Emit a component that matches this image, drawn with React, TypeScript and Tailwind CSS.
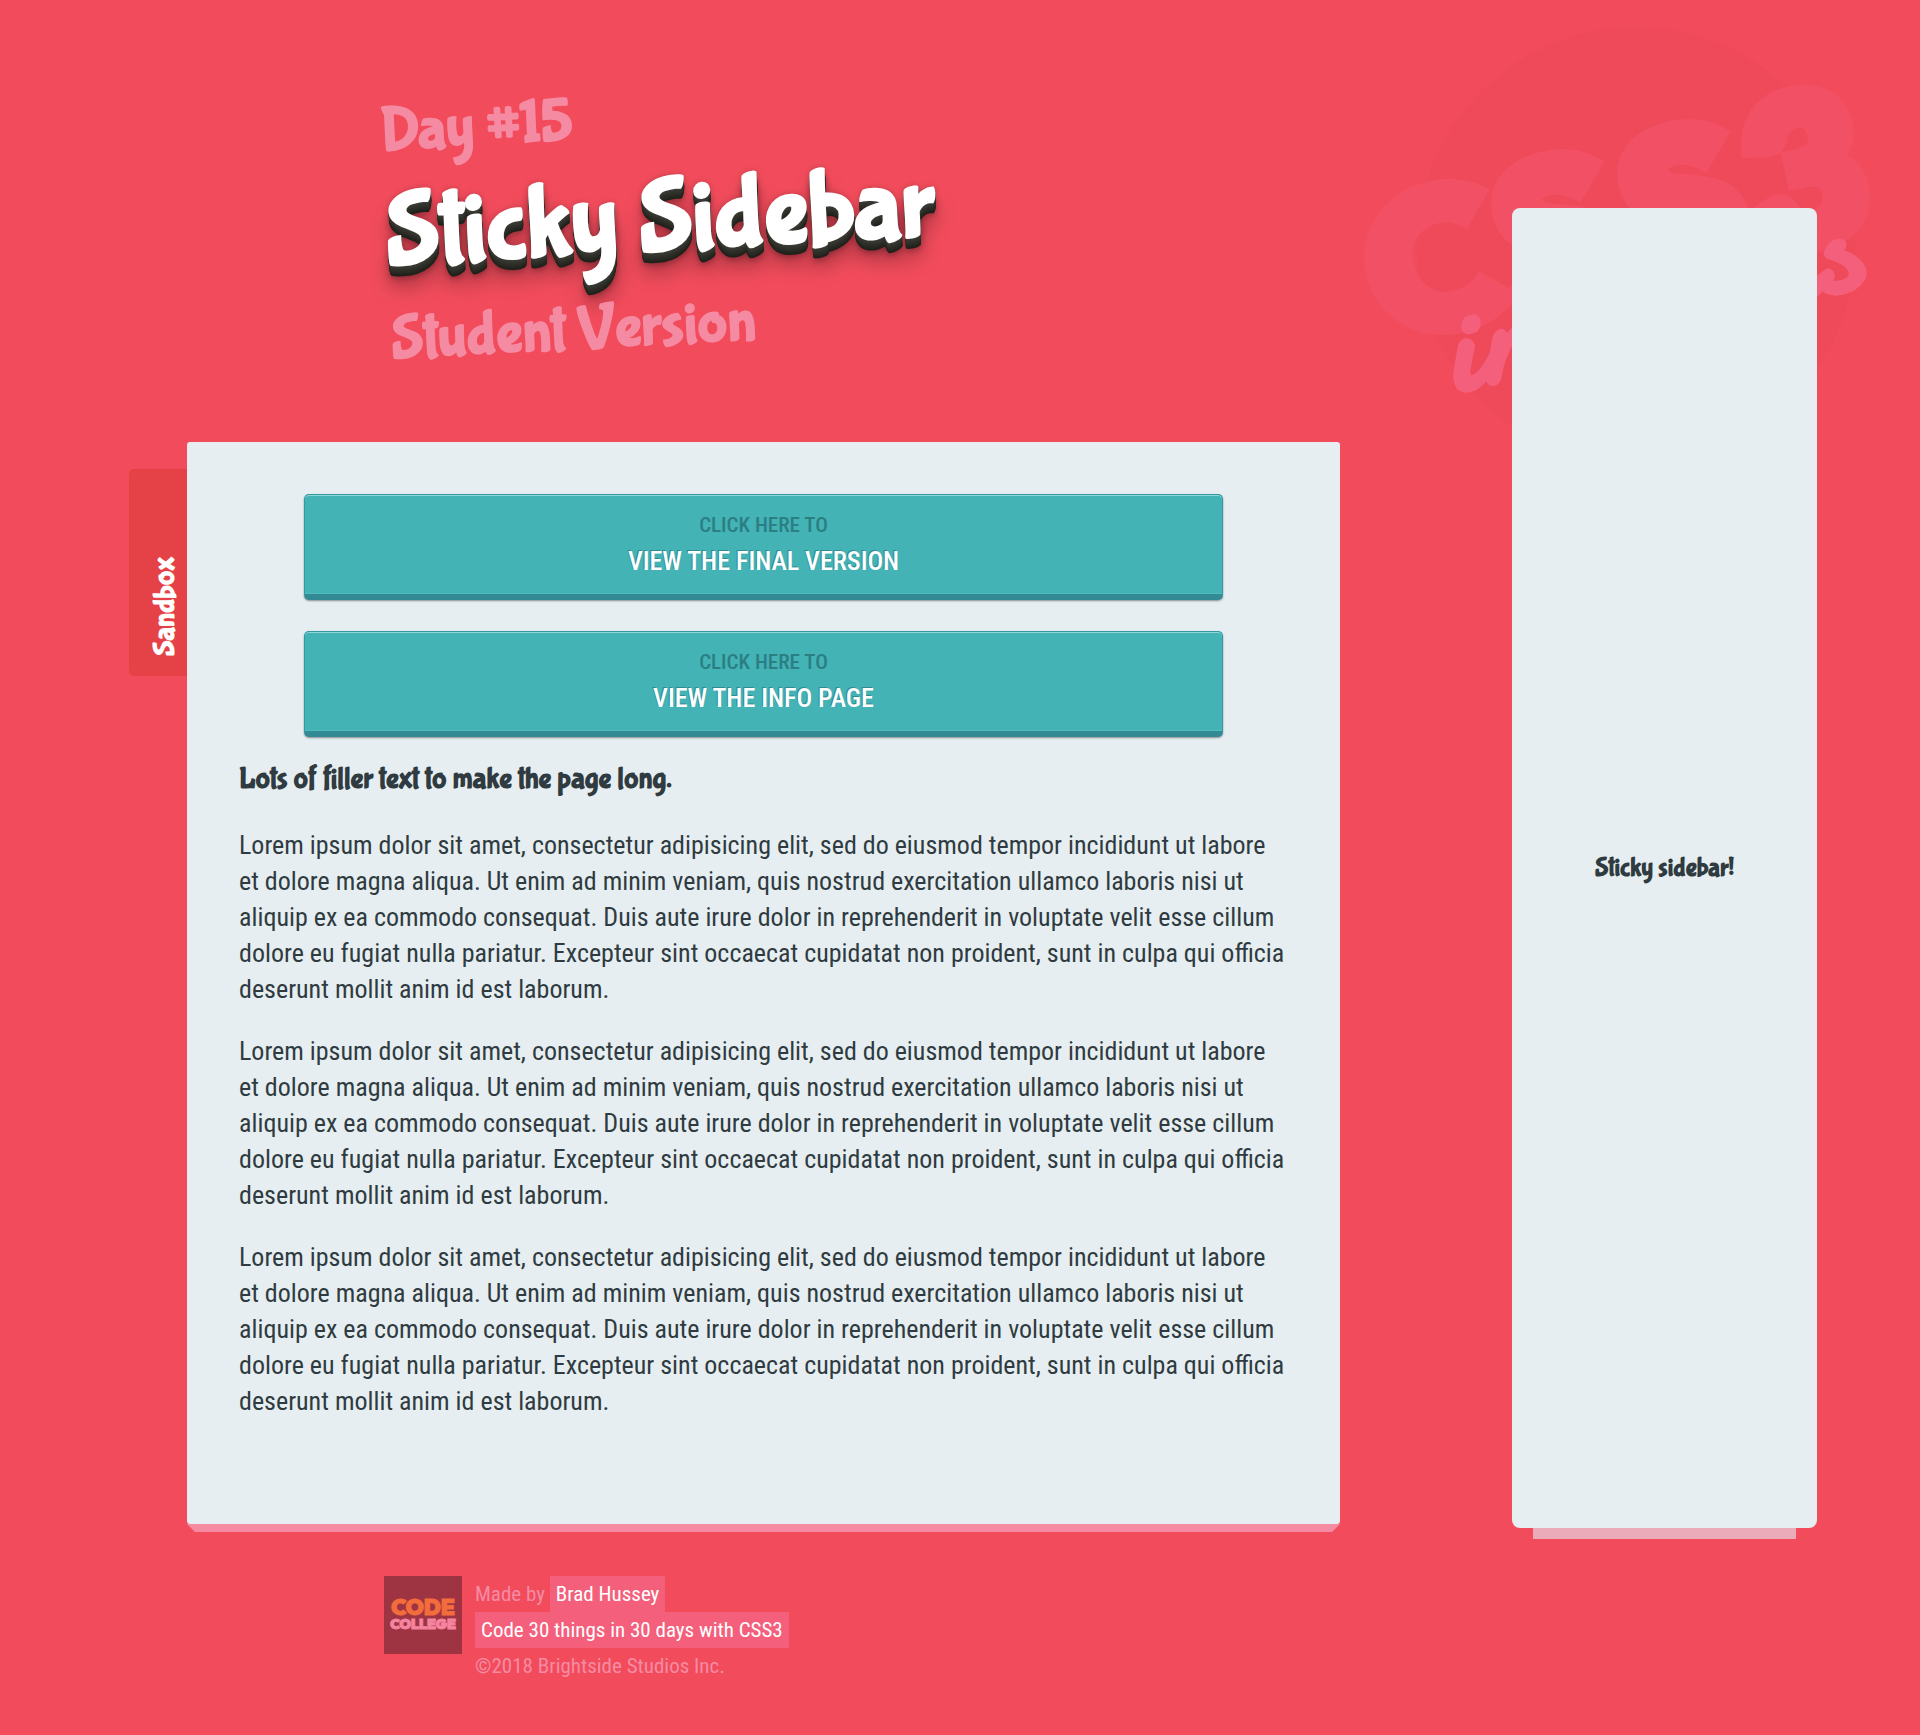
const LOREM =
  "Lorem ipsum dolor sit amet, consectetur adipisicing elit, sed do eiusmod tempor incididunt ut labore et dolore magna aliqua. Ut enim ad minim veniam, quis nostrud exercitation ullamco laboris nisi ut aliquip ex ea commodo consequat. Duis aute irure dolor in reprehenderit in voluptate velit esse cillum dolore eu fugiat nulla pariatur. Excepteur sint occaecat cupidatat non proident, sunt in culpa qui officia deserunt mollit anim id est laborum.";

function Watermark() {
  return (
    <svg
      className="pointer-events-none absolute top-0 right-0 h-[480px] w-[580px]"
      viewBox="0 0 580 480"
      aria-hidden="true"
    >
      <circle cx="296" cy="246" r="219" fill="#ef4a59" />
      <g
        fill="#f25064"
        stroke="#f25064"
        strokeWidth="12"
        className="font-['Outfit','Lato',sans-serif] font-black"
        fontSize="204"
      >
        <text transform="translate(45 347) rotate(-15)" fontSize="200" strokeWidth="8">
          C
        </text>
        <text transform="translate(174 318) rotate(-15)">S</text>
        <text transform="translate(300 288) rotate(-15)">S</text>
        <text
          transform="translate(423 252) rotate(-12)"
          fontSize="200"
          strokeWidth="20"
          className="font-['Lato',sans-serif]"
        >
          3
        </text>
      </g>
      <g fill="#f45f7c" className="font-['Damion','Lato',cursive] font-bold" fontSize="140">
        <text transform="translate(116 392) rotate(-15)">in</text>
        <text transform="translate(225 363) rotate(-15)">30</text>
        <text transform="translate(525 285) rotate(-15)" textAnchor="end">
          days
        </text>
      </g>
    </svg>
  );
}

function ActionLink({ label }: { label: string }) {
  return (
    <a
      href="#"
      className="mx-auto block w-[87.6%] rounded-[5px] border border-b-[6px] border-[#3599a0] border-b-[#338a94] bg-[#43b3b6] pt-3 pb-[15px] text-center leading-9 font-medium text-white uppercase shadow-[inset_0_1px_0_#8ad6d8,inset_0_-1px_0_#4dbcbf,0_1px_2px_rgba(0,0,0,0.4)]"
    >
      <span className="block text-[21px] text-[#2b7f83]">Click here to</span>
      <span className="block text-[26px] [text-shadow:-1px_-1px_0_#2f8a93]">{label}</span>
    </a>
  );
}

function CollegeLogo() {
  return (
    <svg className="size-[78px] shrink-0" viewBox="0 0 78 78" role="img" aria-label="Code College">
      <rect width="78" height="78" fill="#9e3442" />
      <g textAnchor="middle" strokeWidth="1" className="font-['Outfit','Lato',sans-serif] font-black">
        <text x="39" y="39" fontSize="22" fill="#f36d3c" stroke="#f36d3c">
          CODE
        </text>
        <text x="39" y="53" fontSize="14" fill="#f5849f" stroke="#f5849f">
          COLLEGE
        </text>
      </g>
    </svg>
  );
}

export default function App() {
  return (
    <div className="relative min-h-screen overflow-hidden bg-[#f24c5c] font-['Roboto_Condensed','Roboto',sans-serif] text-[26px] leading-9 text-[#2f3b40]">
      <Watermark />
      <div className="relative grid grid-cols-[187fr_1153fr_172fr_305fr_103fr]">
        <header className="col-span-3 col-start-1 row-start-1 pt-[92px] pb-[62px] pl-[20.1vw]">
          <div className="origin-left -rotate-3 font-['Bubblegum_Sans','Boogaloo',cursive] font-bold whitespace-nowrap">
            <p className="text-[62px] leading-[80px] text-[#f58ba3]">Day #15</p>
            <h1 className="mb-1 text-[104px] leading-[124px] text-white [text-shadow:0_1px_0_#3a3b34,0_2px_0_#373831,0_3px_0_#34352e,0_4px_0_#31322b,0_5px_0_#2e2f28,0_6px_0_#2b2c26,0_7px_0_#282923,0_8px_0_#252620,0_9px_0_#22231d,0_10px_0_#1f201b,0_0_6px_rgba(0,0,0,0.2),0_12px_6px_rgba(0,0,0,0.3),0_20px_20px_rgba(0,0,0,0.3)]">
              Sticky Sidebar
            </h1>
            <p className="relative text-[62px] leading-[80px] text-[#f58ba3]">Student Version</p>
          </div>
        </header>

        <main className="relative col-start-2 row-start-2 pb-[7px]">
          <div className="absolute top-[27px] right-full flex h-[207px] w-[58px] items-center justify-end rounded-l-[5px] bg-[#e44246] pr-1 font-['Bubblegum_Sans','Boogaloo',cursive] text-[30px] font-bold text-white">
            <h3 className="h-full rotate-180 pt-5 [writing-mode:vertical-rl]">Sandbox</h3>
          </div>
          <div className="rounded-[3px] bg-[#e6eef1] px-[52px] pt-[52px] pb-[105px]">
            <nav className="flex flex-col gap-[31px]">
              <ActionLink label="View the final version" />
              <ActionLink label="View the info page" />
            </nav>
            <h2 className="mt-6 mb-[30px] font-['Bubblegum_Sans','Boogaloo',cursive] text-[30px] font-bold">
              Lots of filler text to make the page long.
            </h2>
            <div className="flex flex-col gap-[26px]">
              <p>{LOREM}</p>
              <p>{LOREM}</p>
              <p>{LOREM}</p>
            </div>
          </div>
          <div className="h-2 bg-[#f58ba3] [clip-path:polygon(0_0,100%_0,calc(100%_-_8px)_100%,8px_100%)]" />
        </main>

        <aside className="col-start-4 row-span-2 row-start-1 flex flex-col pt-[208px]">
          <div className="flex grow items-center justify-center rounded-lg bg-[#e6eef1]">
            <h3 className="font-['Bubblegum_Sans','Boogaloo',cursive] text-[26px] font-bold">Sticky sidebar!</h3>
          </div>
          <div className="mx-[21px] h-[11px] bg-[#ecabb8]" />
        </aside>
      </div>

      <footer className="relative flex gap-[13px] py-[37px] pl-[20%] text-[21px] text-[#f58ba3]">
        <CollegeLogo />
        <div>
          <p>
            Made by{" "}
            <a href="#" className="inline-block bg-[#f45f7c] px-[6px] text-white">
              Brad Hussey
            </a>
          </p>
          <p>
            <a href="#" className="inline-block bg-[#f45f7c] px-[6px] text-white">
              Code 30 things in 30 days with CSS3
            </a>
          </p>
          <p>©2018 Brightside Studios Inc.</p>
        </div>
      </footer>
    </div>
  );
}
